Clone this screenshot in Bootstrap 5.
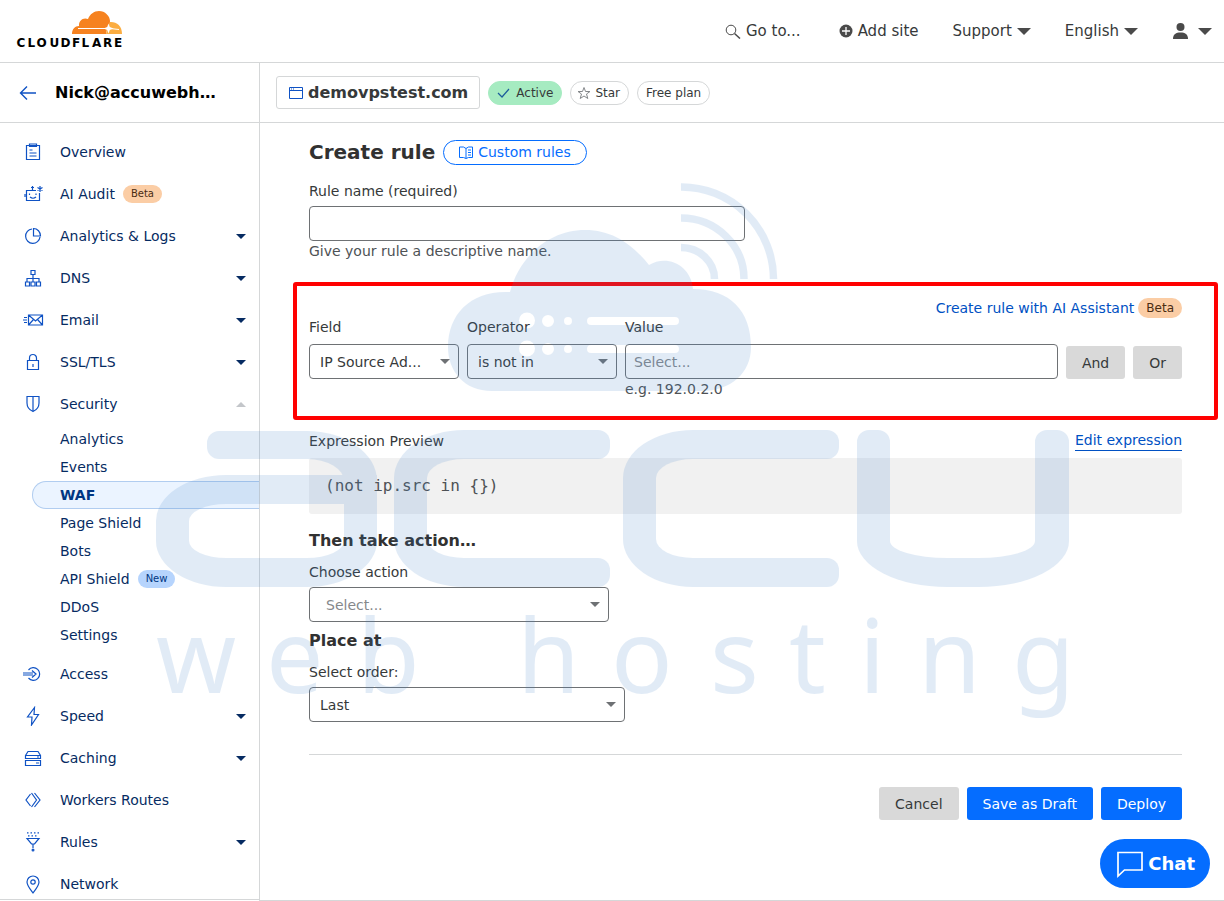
<!DOCTYPE html>
<html lang="en">
<head>
<meta charset="utf-8">
<meta name="viewport" content="width=device-width, initial-scale=1">
<title>Create rule | demovpstest.com | Cloudflare</title>
<link href="https://cdn.jsdelivr.net/npm/bootstrap@5.3.0/dist/css/bootstrap.min.css" rel="stylesheet">
<style>
  body { font-family: "DejaVu Sans", sans-serif; font-size: 14px; line-height: 20px; color: #36393a; background: #fff; }
  a { text-decoration: none; }
  svg { flex: none; }
  .line { border-color: #d5d7d8 !important; }

  /* Top bar */
  .topbar { height: 63px; padding: 0 12px 0 16px; border-bottom: 1px solid; }
  .brand-logo text { font: bold 12px "DejaVu Sans", sans-serif; }
  .topnav { gap: 34px; font-size: 15px; }
  .topnav a { color: #36393a; display: flex; align-items: center; gap: 5px; }
  .tri { width: 0; height: 0; border: 7px solid transparent; border-top-color: #4a4a4a; border-bottom: 0; }

  /* Sidebar */
  .sidebar { width: 260px; border-right: 1px solid; padding-bottom: 1px; }
  .account { height: 60px; padding-left: 19px; gap: 18px; border-bottom: 1px solid; font-size: 16px; font-weight: 700; color: #000; }
  .menu { padding-top: 8px; overflow-y: auto; scrollbar-width: none; border-bottom: 1px solid; }
  .menu::-webkit-scrollbar { display: none; }
  .menu a { color: #062b62; display: flex; align-items: center; }
  .item { height: 42px; padding: 0 13px 0 22px; gap: 16px; }
  .item svg { width: 22px; height: 20px; fill: none; stroke: #0f52c4; stroke-width: 1.2; }
  .item .caret { margin-left: auto; border: 5px solid transparent; border-top-color: #062b62; border-bottom: 0; }
  .item .caret.up { border-bottom: 5px solid #c3c6ca; border-top: 0; }
  .sub { padding: 0 0 4px 32px; }
  .sub a { height: 28px; padding-left: 27px; border: 1px solid transparent; border-right: 0; }
  .sub a.active { background: #ebf4ff; border-color: #b1cdf0; border-radius: 14px 0 0 14px; font-weight: 700; color: #003682; }
  .pill { display: inline-block; border-radius: 10px; font-size: 10px; line-height: 18px; padding: 0 8px; margin-left: 8px; }
  .pill-beta { background: #fbcda5; color: #4a2c12; }
  .pill-new { background: #b6d4fd; color: #003682; }
  .item .pill { margin-left: -8px; }

  /* Zone bar */
  .zonebar { height: 60px; padding: 0 16px; gap: 8px; border-bottom: 1px solid; }
  .zone { height: 33px; padding: 0 11px 0 12px; gap: 5px; border: 1px solid; border-radius: 3px; font-size: 16px; font-weight: 700; background: #fff; color: #36393a; }
  .tag { height: 24px; padding: 0 8px; gap: 4px; border: 1px solid #d5d7d8; border-radius: 12px; font-size: 12px; background: #fff; color: #36393a; display: inline-flex; align-items: center; }
  .tag-active { background: #a6ebc1; border-color: #a6ebc1; gap: 6px; }

  /* Form */
  .content { padding: 17px 42px 0 49px; border-bottom: 1px solid; overflow: hidden; }
  h1 { font-size: 20px; line-height: 25px; font-weight: 700; color: #313131; }
  h2 { font-size: 16px; line-height: 22px; font-weight: 700; color: #313131; margin: 0; }
  label, .caption { display: block; line-height: 20px; }
  .docs { height: 25px; line-height: 22px; padding: 0 15px 1px; gap: 5px; border: 1px solid #056dff; border-radius: 13px; color: #056dff; }
  .field, .pick select { height: 35px; border: 1px solid #6e7174; border-radius: 4px; background: transparent; color: #36393a; padding: 0 8px; width: 100%; display: block; }
  .field::placeholder { color: #85888b; opacity: 1; }
  .pick { position: relative; }
  .pick select { appearance: none; padding: 0 24px 0 10px; }
  .pick::after { content: ""; position: absolute; right: 9px; top: 15px; border: 5px solid transparent; border-top-color: #6e7174; border-bottom: 0; pointer-events: none; }
  .pick select.empty { color: #85888b; padding-left: 16px; }
  .hint { line-height: 20px; color: #4e5255; }
  .rule-name { max-width: 436px; padding-top: 16px; }
  .rule-name label { margin-bottom: 5px; }
  .w-cond { width: 150px; }
  .w-action { width: 300px; }
  .w-order { width: 316px; }
  .builder { margin: 21px -36px 0 -16px; border: 4px solid #f00; border-radius: 3px; padding: 12px 32px 17px 12px; }
  .builder label { line-height: 18px; margin-bottom: 8px; }
  .builder .pill { font-size: 12px; line-height: 20px; padding: 0 8px; margin-left: 4px; color: #4a2c12; }
  .link-blue { color: #0051c3; }
  .edit { border-bottom: 1px solid #0051c3; line-height: 19px; }
  .act { height: 33px; padding: 0 16px; border: 0; border-radius: 3px; }
  .act-grey { background: #d9d9d9; color: #36393a; }
  .act-blue { background: #056dff; color: #fff; }
  .caption { padding-top: 11px; }
  .preview { background: #f1f1f1; border-radius: 3px; height: 56px; padding: 16px; margin: 7px 0 16px; font: 16px/24px "DejaVu Sans Mono", monospace; color: #4e5255; }
  .step { margin: 10px 0 5px; }
  .rule-line { border-top: 1px solid; margin: 32px 0; }
  .chat { position: fixed; right: 14px; bottom: 13px; z-index: 5; height: 49px; padding: 0 15px 0 16px; gap: 4px; border: 0; border-radius: 25px; background: #056dff; color: #fff; font-size: 18px; font-weight: 700; }

  /* Watermark laid over the page */
  .wmark { position: absolute; left: 156px; top: 180px; width: 920px; opacity: .157; color: #4686cc; pointer-events: none; z-index: 3; }
  .wmark svg { display: block; fill: currentColor; }
  .wmark .letters { display: flex; height: 157px; }
  .letters > *, .letters i { position: relative; border: 0 solid; }
  .letters > ::before, .letters > ::after, .ltr-a::before, .ltr-a::after, .ltr-c::before, .ltr-c::after, .ltr-u::before, .ltr-u::after { content: ""; position: absolute; }
  .ltr-a { width: 221px; margin-right: 17px; }
  .ltr-a::before { left: 63px; right: 0; top: 1px; height: 100px; border: solid; border-width: 28px 33px 0 0; border-radius: 0 70px 0 0 / 0 50px 0 0; }
  .ltr-a::after { left: 0; right: 0; bottom: 0; height: 112px; border: solid; border-width: 29px 33px; border-radius: 70px 0 70px 70px / 46px 0 46px 46px; }
  .letters .ltr-a i { position: absolute; left: 51px; top: 1px; width: 12px; height: 28px; background: currentColor; border-radius: 12px 0 0 12px; }
  .letters .ltr-c { width: 204px; margin-right: 25px; border-width: 29px 0 29px 33px; border-radius: 70px 0 0 70px / 48px 0 0 48px; }
  .ltr-c::before, .ltr-c::after { right: -12px; width: 12px; height: 29px; background: currentColor; border-radius: 0 12px 12px 0; }
  .ltr-c::before { top: -29px; }
  .ltr-c::after { bottom: -29px; }
  .letters .ltr-u { width: 212px; margin: 12px 0 0 5px; border-width: 0 34px 29px 33px; border-radius: 0 0 90px 90px / 0 0 46px 46px; }
  .ltr-u::before, .ltr-u::after { top: -12px; height: 12px; background: currentColor; border-radius: 12px 12px 0 0; }
  .ltr-u::before { left: -33px; width: 33px; }
  .ltr-u::after { right: -34px; width: 34px; }
  .wmark text { font: 102px "Noto Sans", sans-serif; }
</style>
</head>
<body class="vh-100 d-flex flex-column overflow-hidden position-relative">

<header class="topbar line d-flex align-items-center justify-content-between flex-shrink-0">
  <a href="#" aria-label="Cloudflare home"><svg class="brand-logo d-block" width="110" height="42" viewBox="0 0 110 42">
    <path fill="#f6821f" d="M56 24c0-5 3-8 7-8-.500-5 4-9 9-7 2-5 6-8 11-8 6 0 11 5 11 10 0 3-1 6-3 8l-1 5Z"/>
    <path fill="#fbad41" d="M95 12c6 0 11 4 11 12H90l1-4 3-8Z"/>
    <path fill="#fff" d="m92.500 13.500 1.300 3.500 3.700 1.500-3.700 1.500-1.300 3.500-1.300-3.500-3.700-1.500 3.700-1.500Z"/>
    <path stroke="#fff" stroke-width="1" d="M62 18.500h30M94 18.500l9 1"/>
    <text x="0.500 11.500 20.500 33.500 44.500 56 65.500 76 87 98" y="36.500" fill="#000">CLOUDFLARE</text>
  </svg></a>
  <nav class="topnav d-flex align-items-center">
    <a href="#"><svg width="16" height="16" viewBox="0 0 16 16" fill="none" stroke="#4a4a4a"><circle cx="6" cy="7" r="4.800"/><path d="m9.500 10.500 5.500 5" stroke-width="1.500"/></svg>Go to...</a>
    <a href="#" class="ms-1"><svg width="14" height="14" viewBox="0 0 14 14"><circle cx="7" cy="7" r="6.500" fill="#4a4a4a"/><path d="M7 3v8M3 7h8" stroke="#fff" stroke-width="1.300"/></svg>Add site</a>
    <a href="#">Support<span class="tri"></span></a>
    <a href="#">English<span class="tri"></span></a>
    <a href="#" aria-label="Account"><svg class="me-1" width="17" height="16" viewBox="0 0 17 16" fill="#4a4a4a"><circle cx="8.500" cy="4" r="4"/><path d="M1 16c0-5 3-6.500 7.500-6.500S16 11 16 16Z"/></svg><span class="tri"></span></a>
  </nav>
</header>

<div class="d-flex flex-grow-1" style="min-height:0">
  <aside class="sidebar line d-flex flex-column flex-shrink-0">
    <div class="account line d-flex align-items-center flex-shrink-0">
      <a href="#" aria-label="Back"><svg class="d-block" width="18" height="16" viewBox="0 0 18 16" fill="none" stroke="#0f52c4" stroke-width="1.400"><path d="M17 8H2M8 1.500 1.500 8 8 14.500"/></svg></a>
      <span>Nick@accuwebh…</span>
    </div>
    <nav class="menu line flex-grow-1">
      <a class="item" href="#"><svg viewBox="0 0 22 20"><path d="M4.500 3.500h13v14h-13ZM7.500 2h7v2.500h-7ZM7.500 8h3M7.500 11h7M7.500 14h7"/></svg>Overview</a>
      <a class="item" href="#"><svg viewBox="0 0 22 20"><path d="M14 6.500H4.500v10h13V9M10.500 2v4.500M9 3.500h3M8 13q3 2.500 6 0M7.500 9.500v1.500M14 9.500v1.500M18 2v6M15.500 3.500l5 3M20.500 3.500l-5 3M3 10v3"/></svg>AI Audit<span class="pill pill-beta">Beta</span></a>
      <a class="item" href="#"><svg viewBox="0 0 22 20"><path d="M10 3a7.200 7.200 0 1 0 8 8M11.500 2.500V10h7c0-4-3-7.500-7-7.500Z"/></svg>Analytics &amp; Logs<span class="caret"></span></a>
      <a class="item" href="#"><svg viewBox="0 0 22 20"><path d="M9 2.500h4v4H9ZM3.500 14h4v4h-4ZM9 14h4v4H9ZM14.500 14h4v4h-4ZM11 6.500V14M5 14v-3.500h12V14"/></svg>DNS<span class="caret"></span></a>
      <a class="item" href="#"><svg viewBox="0 0 22 20"><path d="M6.500 5h14v10h-14ZM6.500 5l7 6 7-6M6.500 15l5-5.500M20.500 15l-5-5.500M2 7.500h3M1 10h4M2 12.500h3"/></svg>Email<span class="caret"></span></a>
      <a class="item" href="#"><svg viewBox="0 0 22 20"><path d="M5.500 8.500h11v9h-11ZM7.500 8.500V6a3.500 3.500 0 0 1 7 0v2.500M11 12v3"/></svg>SSL/TLS<span class="caret"></span></a>
      <a class="item" href="#"><svg viewBox="0 0 22 20"><path d="M5 2.500h12V9c0 4-2.500 7-6 8.500C7.500 16 5 13 5 9ZM11 2.500v15"/></svg>Security<span class="caret up"></span></a>
      <div class="sub">
        <a href="#">Analytics</a>
        <a href="#">Events</a>
        <a href="#" class="active" aria-current="page">WAF</a>
        <a href="#">Page Shield</a>
        <a href="#">Bots</a>
        <a href="#">API Shield<span class="pill pill-new">New</span></a>
        <a href="#">DDoS</a>
        <a href="#">Settings</a>
      </div>
      <a class="item" href="#"><svg viewBox="0 0 22 20"><path d="M6.500 6a6.300 6.300 0 1 1 0 8M1 9h10M1 11h10M10 6.500l4 3.500-4 3.500"/></svg>Access</a>
      <a class="item" href="#"><svg viewBox="0 0 22 20"><path d="M12.500 1.500 5.500 11h4.500l-.500 8 7-10.500h-4.500Z"/></svg>Speed<span class="caret"></span></a>
      <a class="item" href="#"><svg viewBox="0 0 22 20"><path d="M3.500 7.500 6 3.500h10l2.500 4v3h-15ZM3.500 7.500h15M3.500 12.500h15v5h-15ZM15 9h2M14 15h3"/></svg>Caching<span class="caret"></span></a>
      <a class="item" href="#"><svg viewBox="0 0 22 20"><path d="M8.500 4 4 10l4.500 6M9.500 3l5 7-5 7M12.500 3l5.500 7-5.500 7"/></svg>Workers Routes</a>
      <a class="item" href="#"><svg viewBox="0 0 22 20"><path d="M5 6.500h12L12.500 12h-3ZM11 12v4" /><path stroke-dasharray="1.500 2" d="M5 .800h12M6 3.800h10"/><circle cx="11" cy="18" r=".900"/></svg>Rules<span class="caret"></span></a>
      <a class="item" href="#"><svg viewBox="0 0 22 20"><path d="M11 19C8 15 5 11.500 5 8a6 6 0 0 1 12 0c0 3.500-3 7-6 11Z"/><circle cx="11" cy="8" r="2.200"/></svg>Network</a>
    </nav>
  </aside>

  <main class="flex-grow-1 d-flex flex-column" style="min-width:0">
    <div class="zonebar line d-flex align-items-center flex-shrink-0">
      <button type="button" class="zone line d-flex align-items-center"><svg width="14" height="12" viewBox="0 0 14 12" fill="none" stroke="#0f52c4"><path d="M.500 .500h13v11H.500ZM.500 3.500h13M2 2h1M4 2h1"/></svg>demovpstest.com</button>
      <span class="tag tag-active"><svg width="13" height="12" viewBox="0 0 13 12" fill="none" stroke="#1d5c9c" stroke-width="1.200"><path d="m1 6 4 4 7-8"/></svg>Active</span>
      <button type="button" class="tag"><svg style="margin-left:-2px" width="14" height="14" viewBox="0 0 14 14" fill="none" stroke="#85888b"><path d="m7 1.500 1.500 4h4.500L9.500 8l1.300 4.500L7 10l-3.800 2.500L4.500 8 1 5.500h4.500Z"/></svg>Star</button>
      <span class="tag">Free plan</span>
    </div>

    <form class="content line flex-grow-1">
      <div class="d-flex align-items-center gap-2">
        <h1 class="m-0">Create rule</h1>
        <a href="#" class="docs d-flex align-items-center"><svg width="14" height="13" viewBox="0 0 14 13" fill="none" stroke="#056dff"><path d="M.500 1h4L7 2.500 9.500 1h4v10.500h-4L7 12.500l-2.500-1h-4ZM7 2.500v10M9 4h3M9 6.500h3M9 9h3"/></svg>Custom rules</a>
      </div>

      <div class="rule-name">
        <label for="rname">Rule name (required)</label>
        <input id="rname" type="text" class="field">
        <div class="hint">Give your rule a descriptive name.</div>
      </div>

      <div class="builder">
        <div class="d-flex justify-content-end align-items-center" style="height:20px">
          <a href="#" class="link-blue">Create rule with AI Assistant</a><span class="pill pill-beta">Beta</span>
        </div>
        <div class="d-flex gap-2">
          <div class="w-cond"><label for="fld">Field</label><div class="pick"><select id="fld"><option>IP Source Ad...</option></select></div></div>
          <div class="w-cond"><label for="opr">Operator</label><div class="pick"><select id="opr"><option>is not in</option></select></div></div>
          <div class="flex-grow-1"><label for="val">Value</label><input id="val" type="text" class="field" placeholder="Select..."><div class="hint">e.g. 192.0.2.0</div></div>
          <div class="d-flex gap-2 align-items-end pb-3 mb-1"><button type="button" class="act act-grey">And</button><button type="button" class="act act-grey">Or</button></div>
        </div>
      </div>

      <div class="d-flex justify-content-between caption">
        <span>Expression Preview</span><a href="#" class="link-blue edit">Edit expression</a>
      </div>
      <div class="preview">(not ip.src in {})</div>

      <h2>Then take action…</h2>
      <label for="action" class="step">Choose action</label>
      <div class="pick w-action"><select id="action" class="empty"><option>Select...</option></select></div>

      <h2 class="mt-2">Place at</h2>
      <label for="order" class="step">Select order:</label>
      <div class="pick w-order"><select id="order"><option>Last</option></select></div>

      <div class="rule-line line"></div>
      <div class="d-flex justify-content-end gap-2">
        <button type="button" class="act act-grey">Cancel</button>
        <button type="button" class="act act-blue">Save as Draft</button>
        <button type="submit" class="act act-blue">Deploy</button>
      </div>
    </form>
  </main>
</div>

<button type="button" class="chat d-flex align-items-center"><svg width="28" height="28" viewBox="0 0 28 28" fill="none" stroke="#fff" stroke-width="1.700"><path d="M2 2.500h24v17.500H8.500L2 26Z"/></svg>Chat</button>

<div class="wmark" aria-hidden="true">
  <svg width="920" height="250" viewBox="156 180 920 250">
    <path fill-rule="evenodd" d="M510 292C520 255 550 230 585 230c28 0 48 15 64 35 18-11 42 0 44 24 37 0 58 22 58 58 0 26-20 44-50 44H492c-28 0-44-20-44-44 0-34 24-57 62-55Z
      M519 320.500a8 8 0 1 0 16 0a8 8 0 1 0-16 0Z M542 321a6 6 0 1 0 12 0a6 6 0 1 0-12 0Z M564 321a4 4 0 1 0 8 0a4 4 0 1 0-8 0Z M591 317h84a4 4 0 0 1 0 8h-84a4 4 0 0 1 0-8Z
      M519 348.500a8 8 0 1 0 16 0a8 8 0 1 0-16 0Z M542 349a6 6 0 1 0 12 0a6 6 0 1 0-12 0Z M564 349a4 4 0 1 0 8 0a4 4 0 1 0-8 0Z M591 345h84a4 4 0 0 1 0 8h-84a4 4 0 0 1 0-8Z"/>
    <path fill="none" stroke="currentColor" stroke-width="7.500" d="M681 187A92 92 0 0 1 773.500 279M681 218A63 61 0 0 1 744 279M681 247.500A33.500 31.500 0 0 1 714.500 279"/>
  </svg>
  <div class="letters"><div class="ltr-a"><i></i></div><div class="ltr-c"></div><div class="ltr-c"></div><div class="ltr-u"></div></div>
  <svg width="920" height="140" viewBox="156 587 920 140" overflow="visible"><text x="156 266 357 437 517 611 710 789 859 918 1012" y="693">web hosting</text></svg>
</div>

<script src="https://cdn.jsdelivr.net/npm/bootstrap@5.3.0/dist/js/bootstrap.bundle.min.js"></script>
</body>
</html>
